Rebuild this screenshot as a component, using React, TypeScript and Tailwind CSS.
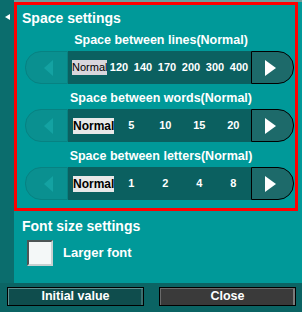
import React from "react";

const font = "font-['Liberation_Sans',Arial,sans-serif]";

function LeftButton() {
  return (
    <div className="w-[43px] h-full flex-none rounded-l-[16px] bg-[#0a9090] border border-[#078282] flex items-center justify-center">
      <div className="w-0 h-0 border-y-[8px] border-y-transparent border-r-[9px] border-r-[#14a2a2] ml-[4px]" />
    </div>
  );
}

function RightButton() {
  return (
    <div className="w-[43px] h-full flex-none rounded-r-[16px] bg-[#1d6a6a] border-[1.5px] border-black flex items-center justify-center">
      <div className="w-0 h-0 border-y-[8px] border-y-transparent border-l-[11px] border-l-white mr-[4px]" />
    </div>
  );
}

function SubTitle({ text }: { text: string }) {
  return (
    <div className="pl-[10px] h-[16px] text-center text-[12.5px] leading-[16px] font-bold text-white">
      {text}
    </div>
  );
}

function Slider({ wide, values }: { wide?: boolean; values: string[] }) {
  return (
    <div className="ml-[8px] mr-[1px] h-[33px] flex">
      <LeftButton />
      <div className={`flex-1 h-full bg-[#0b6060] flex items-center ${wide ? "pl-[4px]" : "pl-[5px]"}`}>
        {wide ? (
          <span className="w-[35px] text-center bg-[#d9d6dc] text-black text-[11px] leading-[15px]">Normal</span>
        ) : (
          <span className="bg-[#e8e8e8] text-black text-[12px] font-bold leading-[16px]">Normal</span>
        )}
        {values.map((v) => (
          <span
            key={v}
            className={`${wide ? "w-[24px]" : "w-[34px]"} text-center text-white font-bold text-[11px] leading-[15px]`}
          >
            {v}
          </span>
        ))}
      </div>
      <RightButton />
    </div>
  );
}

export default function App() {
  return (
    <div className={`w-[302px] h-[312px] bg-[#0b6464] flex flex-col ${font}`}>
      <div className="h-[283px] flex flex-none">
        <div className="w-[14px] flex-none bg-[#0b6d6d] pt-[14px] pl-[5px]">
          <div className="w-0 h-0 border-y-[3.5px] border-y-transparent border-r-[5px] border-r-white" />
        </div>
        <div className="flex-1 bg-[#009999] border-t-2 border-[#6f9e9e] pr-[4px]">
          <div className="border-[3px] border-[#ff0000] h-[209px]">
            <div className="pl-[5px] pt-[4px] h-[22px] text-[14px] leading-[18px] font-bold text-white">
              Space settings
            </div>
            <div className="mt-[5px]">
              <SubTitle text="Space between lines(Normal)" />
              <div className="mt-[3px]">
                <Slider wide values={["120", "140", "170", "200", "300", "400"]} />
              </div>
            </div>
            <div className="mt-[6px]">
              <SubTitle text="Space between words(Normal)" />
              <div className="mt-[3px]">
                <Slider values={["5", "10", "15", "20"]} />
              </div>
            </div>
            <div className="mt-[6px]">
              <SubTitle text="Space between letters(Normal)" />
              <div className="mt-[3px]">
                <Slider values={["1", "2", "4", "8"]} />
              </div>
            </div>
          </div>
          <div className="pl-[8px] pt-[6px] h-[24px] text-[14px] leading-[18px] font-bold text-white">
            Font size settings
          </div>
          <div className="pl-[13px] mt-[5px] flex items-center gap-[10px]">
            <div className="w-[26px] h-[26px] bg-[#f4f8f8] border-2 border-t-[#4d5656] border-l-[#4d5656] border-r-[#c8d0d0] border-b-[#c8d0d0]" />
            <span className="text-[13px] font-bold text-white leading-[16px]">Larger font</span>
          </div>
        </div>
      </div>
      <div className="flex-1 pl-[7px] pt-[4px] flex gap-[15px]">
        <div className="w-[137px] h-[19px] bg-[#0f4d4d] border border-black shadow-[inset_1px_1px_0_#5f8f8f,inset_-2px_0_0_#3b6f6f] flex items-center justify-center text-white font-bold text-[12.5px]">
          Initial value
        </div>
        <div className="w-[137px] h-[19px] bg-[#3a3a3a] border border-black shadow-[inset_1px_1px_0_#6a6a6a,inset_-2px_0_0_#7a7a7a] flex items-center justify-center text-white font-bold text-[12.5px]">
          Close
        </div>
      </div>
    </div>
  );
}
